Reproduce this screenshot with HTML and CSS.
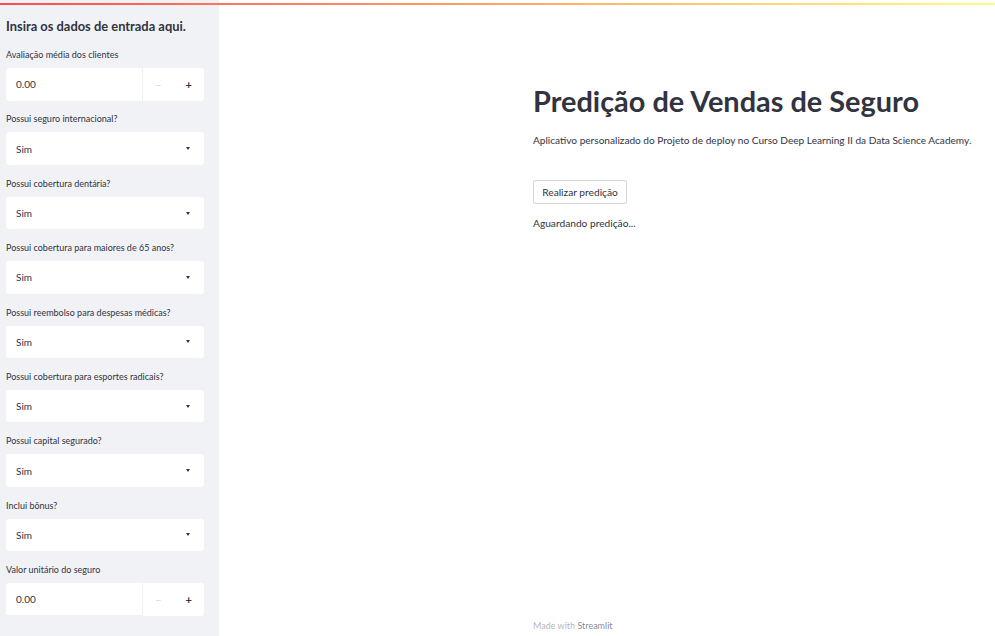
FILE: index.html
```html
<!DOCTYPE html>
<html lang="pt">
<head>
<meta charset="utf-8">
<title>Predição de Vendas de Seguro</title>
<link rel="stylesheet" href="styles.css">
</head>
<body>
<div class="decoration"></div>
<div class="app">
  <aside class="sidebar">
    <h2 class="side-title">Insira os dados de entrada aqui.</h2>
    <div class="widgets">
      <div class="widget">
        <label class="wlabel">Avaliação média dos clientes</label>
        <div class="box number">
          <span class="num-value">0.00</span>
          <span class="step minus">−</span>
          <span class="step plus">+</span>
        </div>
      </div>
      <div class="widget">
        <label class="wlabel">Possui seguro internacional?</label>
        <div class="box select"><span class="sel-value">Sim</span><span class="caret"></span></div>
      </div>
      <div class="widget">
        <label class="wlabel">Possui cobertura dentária?</label>
        <div class="box select"><span class="sel-value">Sim</span><span class="caret"></span></div>
      </div>
      <div class="widget">
        <label class="wlabel">Possui cobertura para maiores de 65 anos?</label>
        <div class="box select"><span class="sel-value">Sim</span><span class="caret"></span></div>
      </div>
      <div class="widget">
        <label class="wlabel">Possui reembolso para despesas médicas?</label>
        <div class="box select"><span class="sel-value">Sim</span><span class="caret"></span></div>
      </div>
      <div class="widget">
        <label class="wlabel">Possui cobertura para esportes radicais?</label>
        <div class="box select"><span class="sel-value">Sim</span><span class="caret"></span></div>
      </div>
      <div class="widget">
        <label class="wlabel">Possui capital segurado?</label>
        <div class="box select"><span class="sel-value">Sim</span><span class="caret"></span></div>
      </div>
      <div class="widget">
        <label class="wlabel">Inclui bônus?</label>
        <div class="box select"><span class="sel-value">Sim</span><span class="caret"></span></div>
      </div>
      <div class="widget">
        <label class="wlabel">Valor unitário do seguro</label>
        <div class="box number">
          <span class="num-value underline">0.00</span>
          <span class="step minus">−</span>
          <span class="step plus">+</span>
        </div>
      </div>
    </div>
  </aside>
  <main class="main">
    <h1 class="title">Predição de Vendas de Seguro</h1>
    <p class="desc">Aplicativo personalizado do Projeto de deploy no Curso Deep Learning II da Data Science Academy.</p>
    <button class="btn" type="button">Realizar predição</button>
    <p class="status">Aguardando predição...</p>
    <footer class="footer">Made with <span class="brand">Streamlit</span></footer>
  </main>
</div>
</body>
</html>
```

FILE: styles.css
```css
* { box-sizing: border-box; }
html, body {
  margin: 0;
  padding: 0;
  height: 100%;
}
body {
  font-family: "Lato", "Liberation Sans", sans-serif;
  color: #31333f;
  background: #ffffff;
  overflow: hidden;
}
.decoration {
  position: absolute;
  top: 3px;
  left: 0;
  right: 0;
  height: 2px;
  background: linear-gradient(90deg, #ff4b4b, #fffd80);
  z-index: 10;
}
.app {
  display: flex;
  height: 100vh;
}
.sidebar {
  width: 219px;
  flex: 0 0 219px;
  background: #f0f2f6;
  padding: 16px 15px 0 6px;
}
.side-title {
  margin: 0;
  font-size: 12.9px;
  line-height: 20px;
  font-weight: 700;
  color: #31333f;
}
.widgets {
  display: flex;
  flex-direction: column;
  gap: 11.9px;
  margin-top: 12px;
}
.widget {
  display: flex;
  flex-direction: column;
}
.wlabel {
  font-size: 9px;
  line-height: 14px;
  height: 14px;
  margin-bottom: 6px;
  color: #31333f;
}
.box {
  height: 32.5px;
  background: #ffffff;
  border-radius: 3px;
  display: flex;
  align-items: center;
  font-size: 10px;
}
.number .num-value {
  width: 137px;
  height: 100%;
  display: flex;
  align-items: center;
  padding-left: 10px;
  border-right: 1px solid #eef0f4;
}
.number .num-value.underline {
  border-bottom: 1px solid #eef0f4;
}
.step {
  flex: 1;
  text-align: center;
  font-size: 11px;
  font-weight: 700;
}
.step.minus {
  color: #d5d8e0;
  font-weight: 400;
}
.step.plus {
  color: #31333f;
}
.select {
  justify-content: space-between;
  padding: 0 14px 0 10px;
}
.caret {
  width: 0;
  height: 0;
  border-left: 2.5px solid transparent;
  border-right: 2.5px solid transparent;
  border-top: 3px solid #31333f;
}
.main {
  flex: 1;
  display: flex;
  flex-direction: column;
  align-items: flex-start;
  padding: 83px 0 0 314px;
}
.title {
  margin: 0;
  font-size: 28.9px;
  line-height: 36px;
  font-weight: 700;
  color: #31333f;
}
.desc {
  margin: 14px 0 0;
  font-size: 10.1px;
  line-height: 14px;
}
.btn {
  margin-top: 33px;
  height: 24px;
  width: 94px;
  padding: 0;
  font-family: inherit;
  font-size: 10.2px;
  color: #31333f;
  background: #ffffff;
  border: 1px solid rgba(49, 51, 63, 0.2);
  border-radius: 3px;
}
.status {
  margin: 12px 0 0;
  font-size: 10.2px;
  line-height: 14px;
}
.footer {
  margin-top: auto;
  margin-bottom: 3px;
  font-size: 9px;
  line-height: 14px;
  color: rgba(49, 51, 63, 0.4);
}
.brand {
  color: rgba(49, 51, 63, 0.6);
}
```
